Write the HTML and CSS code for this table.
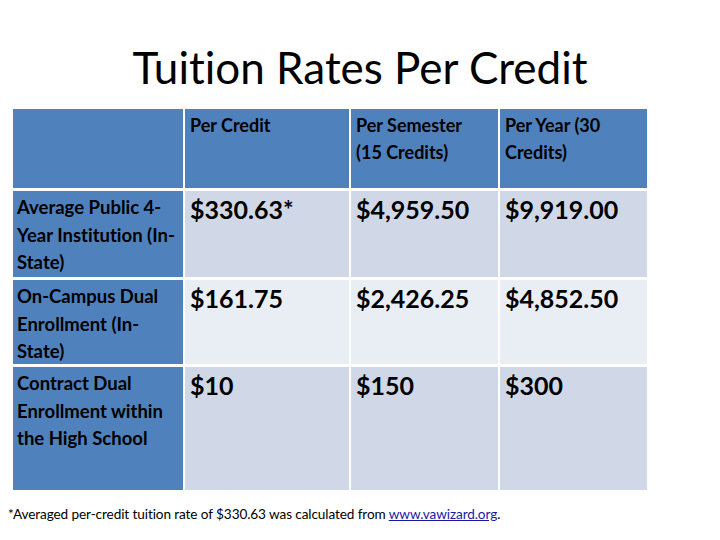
FILE: index.html
```html
<!DOCTYPE html>
<html>
<head>
<meta charset="utf-8">
<link rel="stylesheet" href="styles.css">
</head>
<body>
<div class="slide">
  <h1 class="title">Tuition Rates Per Credit</h1>
  <div class="table">
    <div class="cell head"></div>
    <div class="cell head">Per Credit</div>
    <div class="cell head">Per Semester (15 Credits)</div>
    <div class="cell head">Per Year (30 Credits)</div>

    <div class="cell rowhead">Average Public 4-Year Institution (In-State)</div>
    <div class="cell val dark">$330.63*</div>
    <div class="cell val dark">$4,959.50</div>
    <div class="cell val dark">$9,919.00</div>

    <div class="cell rowhead">On-Campus Dual Enrollment (In-State)</div>
    <div class="cell val light">$161.75</div>
    <div class="cell val light">$2,426.25</div>
    <div class="cell val light">$4,852.50</div>

    <div class="cell rowhead">Contract Dual Enrollment within the High School</div>
    <div class="cell val dark">$10</div>
    <div class="cell val dark">$150</div>
    <div class="cell val dark">$300</div>
  </div>
  <p class="note">*Averaged per-credit tuition rate of $330.63 was calculated from <a href="#" class="link">www.vawizard.org</a>.</p>
</div>
</body>
</html>
```
FILE: styles.css
```css
html, body {
  margin: 0;
  padding: 0;
  background: #ffffff;
}
.slide {
  width: 720px;
  height: 540px;
  position: relative;
  font-family: Lato, "Open Sans", sans-serif;
  font-variant-ligatures: none;
  color: #000;
}
.title {
  margin: 0;
  padding-top: 40px;
  height: 69px;
  box-sizing: content-box;
  text-align: center;
  font-weight: normal;
  font-size: 44px;
  line-height: 54px;
  letter-spacing: 0;
}
.table {
  margin-left: 13px;
  display: grid;
  grid-template-columns: 170px 164px 147px 147px;
  grid-template-rows: 79px 86px 84px 123px;
  column-gap: 2px;
  row-gap: 3px;
}
.cell {
  box-sizing: border-box;
  padding: 3px 5px 0 5px;
  font-weight: bold;
}
.head {
  background: #4f81bd;
  font-size: 18px;
  line-height: 27px;
  padding-right: 12px;
}
.rowhead {
  background: #4f81bd;
  font-size: 18.5px;
  line-height: 27.5px;
  padding-left: 4px;
  padding-right: 2px;
}
.val {
  font-size: 25px;
  line-height: 30px;
  padding-top: 3px;
}
.dark { background: #d0d8e8; }
.light { background: #e9edf4; }
.note {
  margin: 16px 0 0 8px;
  font-size: 13.6px;
  line-height: 16px;
  letter-spacing: -0.1px;
}
.link {
  color: #1a1aa6;
  text-decoration: underline;
}
```
